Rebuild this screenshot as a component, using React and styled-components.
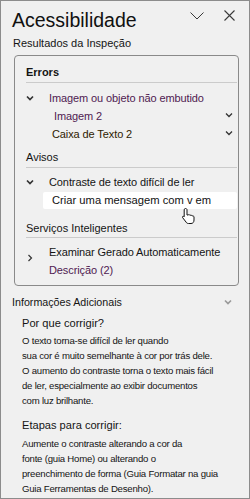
import styled, { createGlobalStyle } from 'styled-components';

const Global = createGlobalStyle`
    html, body {
        margin: 0;
        padding: 0;
        background: #f0f0f0;
    }
    * {
        box-sizing: border-box;
    }
`;

const Pane = styled.div`
    position: relative;
    width: 250px;
    height: 499px;
    overflow: hidden;
    background: #f0f0f0;
    border: 1px solid #8c8c8c;
    font-family: 'Liberation Sans', Arial, sans-serif;
    color: #141414;
    display: flex;
    flex-direction: column;
    white-space: nowrap;
`;

const Header = styled.div`
    display: flex;
    align-items: flex-start;
    padding: 7px 0 0 11px;
`;

const Title = styled.h1`
    flex: 1;
    margin: 0;
    font-size: 19.5px;
    font-weight: 400;
    line-height: 24px;
    color: #111;
`;

const HeaderIcons = styled.div`
    display: flex;
    align-items: center;
    height: 15px;
    gap: 20px;
    padding-right: 14px;
`;

const SectionLabel = styled.div`
    font-size: 11px;
    line-height: 14px;
    padding-left: 12px;
    margin-top: 4px;
`;

const ResultsBox = styled.div`
    margin: 5px 10px 0 13px;
    height: 231px;
    flex-shrink: 0;
    border: 1px solid #8a8a8a;
    border-radius: 4px;
    padding: 0 0 0 11px;
    display: flex;
    flex-direction: column;
`;

const GroupTitle = styled.div`
    font-size: 11px;
    line-height: 16px;
    font-weight: ${(p) => (p.bold ? 700 : 400)};
    padding-top: ${(p) => p.pt || 0}px;
    padding-bottom: ${(p) => (p.pb === undefined ? 2 : p.pb)}px;
    border-bottom: 1px solid #cbcbcb;
    margin-right: 1px;
`;

const Row = styled.div`
    display: flex;
    align-items: ${(p) => (p.multi ? 'flex-start' : 'center')};
    font-size: 11px;
    letter-spacing: -0.1px;
    line-height: 18px;
    color: ${(p) => p.color || '#141414'};
    padding-left: ${(p) => p.indent || 0}px;
    margin-top: ${(p) => p.mt || 0}px;
`;

const Caret = styled.span`
    width: 23px;
    flex-shrink: 0;
    display: flex;
    align-items: ${(p) => (p.multi ? 'flex-start' : 'center')};
    height: ${(p) => (p.multi ? 'auto' : '14px')};
    padding-top: ${(p) => (p.multi ? 11 : 0)}px;
`;

const RowText = styled.span`
    flex: 1;
`;

const SubLine = styled.span`
    display: block;
    color: ${(p) => p.color || 'inherit'};
`;

const RightCaret = styled.span`
    display: flex;
    padding: 0 5px 2px 0;
`;

const Highlight = styled.div`
    margin: 1px 1px 0 17px;
    height: 17px;
    background: #ffffff;
    border-radius: 2px;
    font-size: 11.2px;
    line-height: 17px;
    padding-left: 9px;
    color: #111;
`;

const InfoHeader = styled.div`
    display: flex;
    align-items: center;
    font-size: 10.7px;
    line-height: 14px;
    padding: 0 17px 0 11px;
    margin-top: 9px;
`;

const InfoTitle = styled.span`
    flex: 1;
`;

const SubHeading = styled.div`
    font-size: 11.1px;
    line-height: 16px;
    padding-left: 21px;
    margin-top: ${(p) => p.mt || 0}px;
`;

const Paragraph = styled.p`
    margin: ${(p) => p.mt || 3}px 0 0 21px;
    font-size: 9.6px;
    letter-spacing: -0.22px;
    line-height: 15px;
    color: #141414;
`;

const Line = styled.span`
    display: block;
`;

const Pointer = styled.svg`
    position: absolute;
    left: 180px;
    top: 206px;
`;

const Chevron = ({ dir = 'down', w = 8, h = 8, color = '#333', stroke = 1.4 }) => {
    const pts = {
        down: '1,2.5 4,5.5 7,2.5',
        right: '2.5,1 5.5,4 2.5,7',
    }[dir];
    return (
        <svg width={w} height={h} viewBox="0 0 8 8">
            <polyline points={pts} fill="none" stroke={color} strokeWidth={stroke} />
        </svg>
    );
};

const purple = '#4f1a50';

export default function App() {
    return (
        <>
            <Global />
            <Pane>
                <Header>
                    <Title>Acessibilidade</Title>
                    <HeaderIcons>
                        <svg width="14" height="8" viewBox="0 0 14 8">
                            <polyline points="0.5,0.5 7,7 13.5,0.5" fill="none" stroke="#3a3a3a" strokeWidth="1" />
                        </svg>
                        <svg width="11" height="11" viewBox="0 0 11 11">
                            <path d="M0.5 0.5 L10.5 10.5 M10.5 0.5 L0.5 10.5" stroke="#3a3a3a" strokeWidth="1.1" />
                        </svg>
                    </HeaderIcons>
                </Header>
                <SectionLabel>Resultados da Inspeção</SectionLabel>
                <ResultsBox>
                    <GroupTitle bold pt={8}>Errors</GroupTitle>
                    <Row mt={6} color={purple}>
                        <Caret>
                            <Chevron stroke={1.7} />
                        </Caret>
                        <RowText>Imagem ou objeto não embutido</RowText>
                    </Row>
                    <Row indent={28} color={purple}>
                        <RowText>Imagem 2</RowText>
                        <RightCaret>
                            <Chevron stroke={1.3} />
                        </RightCaret>
                    </Row>
                    <Row indent={26} color="#2e2100">
                        <RowText>Caixa de Texto 2</RowText>
                        <RightCaret>
                            <Chevron stroke={1.3} />
                        </RightCaret>
                    </Row>
                    <GroupTitle pt={6}>Avisos</GroupTitle>
                    <Row mt={5}>
                        <Caret>
                            <Chevron stroke={1.7} />
                        </Caret>
                        <RowText>Contraste de texto difícil de ler</RowText>
                    </Row>
                    <Highlight>Criar uma mensagem com v em</Highlight>
                    <GroupTitle pt={11} pb={1}>Serviços Inteligentes</GroupTitle>
                    <Row mt={5} multi>
                        <Caret multi>
                            <Chevron dir="right" stroke={1.2} />
                        </Caret>
                        <RowText>
                            <SubLine>Examinar Gerado Automaticamente</SubLine>
                            <SubLine color={purple}>Descrição (2)</SubLine>
                        </RowText>
                    </Row>
                </ResultsBox>
                <InfoHeader>
                    <InfoTitle>Informações Adicionais</InfoTitle>
                    <Chevron color="#9a9a9a" stroke={1.7} />
                </InfoHeader>
                <SubHeading mt={6}>Por que corrigir?</SubHeading>
                <Paragraph mt={2}>
                    <Line>O texto torna-se difícil de ler quando</Line>
                    <Line>sua cor é muito semelhante à cor por trás dele.</Line>
                    <Line>O aumento do contraste torna o texto mais fácil</Line>
                    <Line>de ler, especialmente ao exibir documentos</Line>
                    <Line>com luz brilhante.</Line>
                </Paragraph>
                <SubHeading mt={9}>Etapas para corrigir:</SubHeading>
                <Paragraph mt={3}>
                    <Line>Aumente o contraste alterando a cor da</Line>
                    <Line>fonte (guia Home) ou alterando o</Line>
                    <Line>preenchimento de forma (Guia Formatar na guia</Line>
                    <Line>Guia Ferramentas de Desenho).</Line>
                </Paragraph>
                <Pointer width="16" height="18" viewBox="0 0 16 18">
                    <path
                        d="M4.5 1.5 C5.3 1.5 6 2 6 2.8 L6 8 L7 8 C7.8 7.4 8.8 7.6 9 8.4 C9.8 7.9 10.8 8.2 11 9 C11.8 8.6 13 9 13 10 L13 13 C13 15 12 16.5 10 16.5 L7.5 16.5 C6.3 16.5 5.6 16 5 15 L1.6 10.6 C1 9.8 2 8.8 2.8 9.4 L3.2 9.8 L3.2 2.8 C3.2 2 3.8 1.5 4.5 1.5 Z"
                        fill="#fff"
                        stroke="#111"
                        strokeWidth="1"
                    />
                </Pointer>
            </Pane>
        </>
    );
}
